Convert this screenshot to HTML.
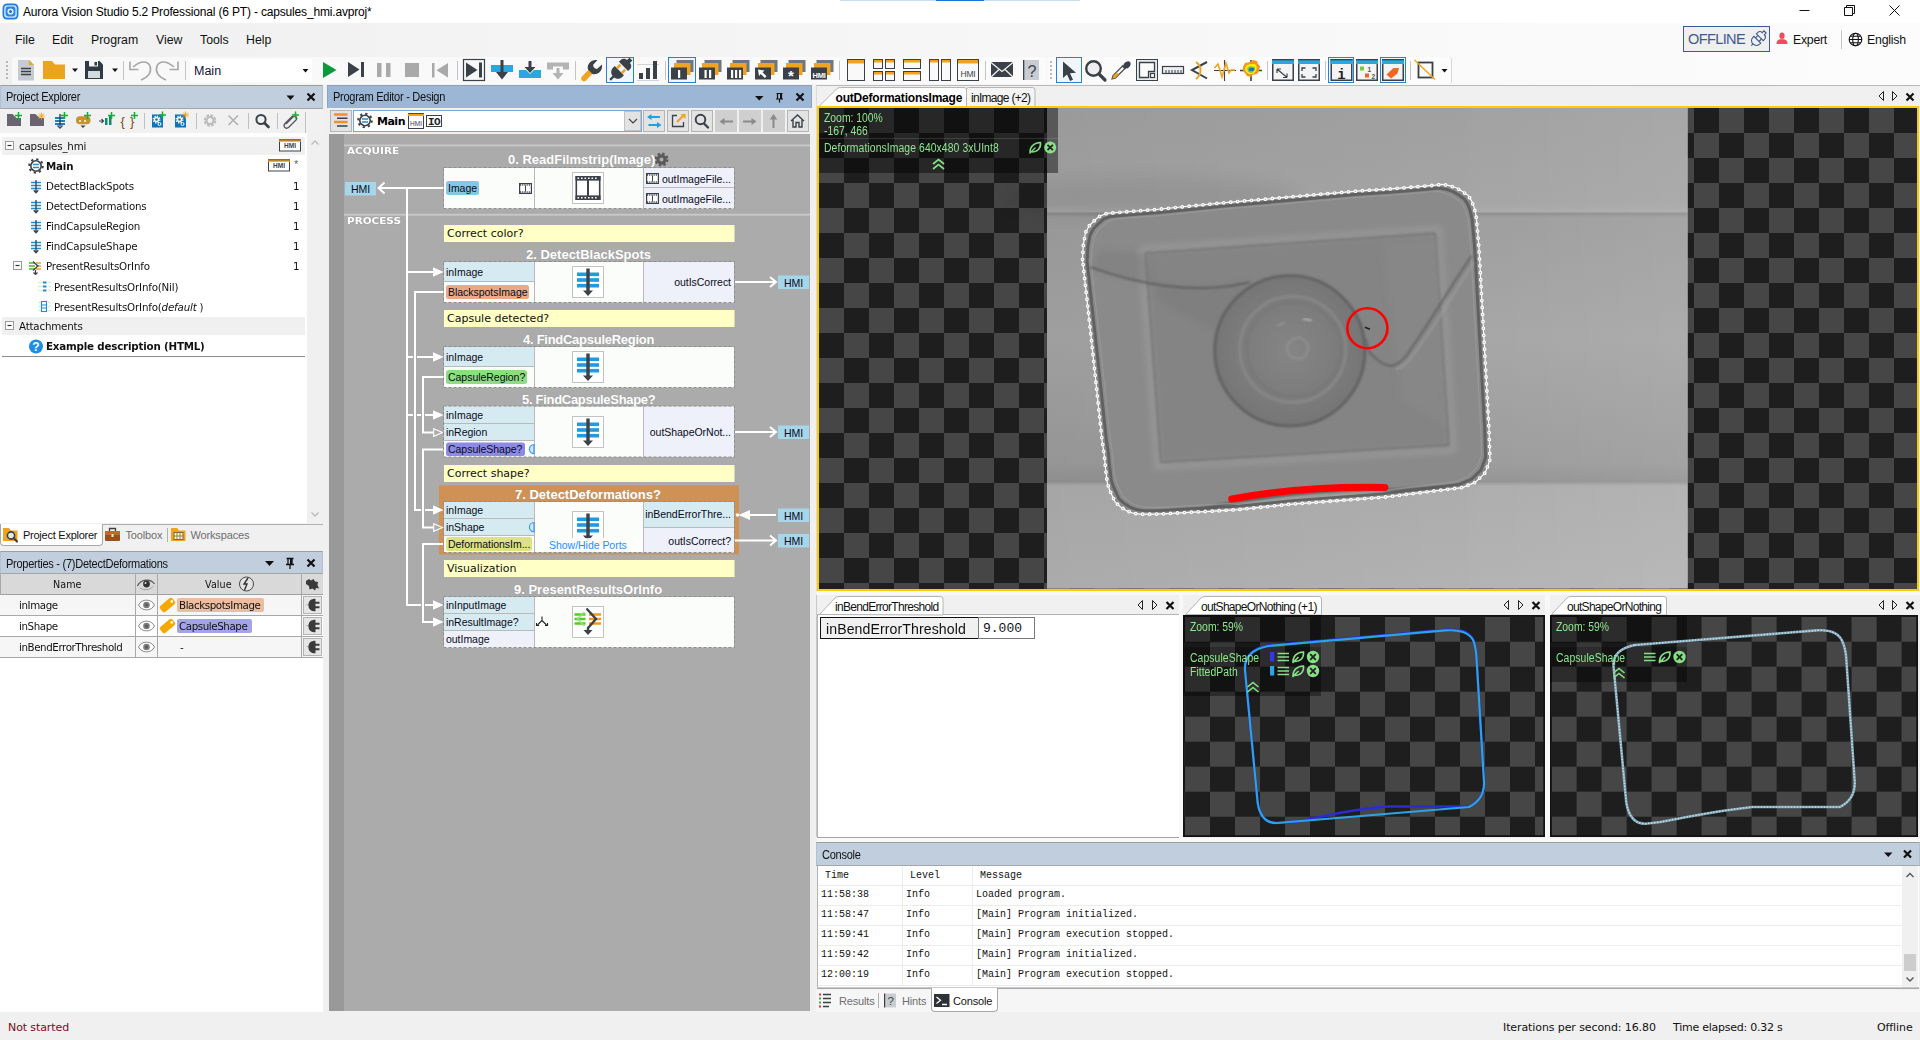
<!DOCTYPE html>
<html lang="en">
<head>
<meta charset="utf-8">
<title>Aurora Vision Studio 5.2 Professional (6 PT) - capsules_hmi.avproj*</title>
<style>
*{box-sizing:border-box;margin:0;padding:0}
html,body{width:1920px;height:1040px;overflow:hidden;background:#f0f0f0;font-family:"Liberation Sans",sans-serif;font-size:12px;color:#000}
.abs{position:absolute}
#app{position:relative;width:1920px;height:1040px;overflow:hidden;background:#f0f0f0}
.t{position:absolute;white-space:nowrap;line-height:1;margin-top:1px;transform-origin:0 50%}
svg{position:absolute;overflow:visible}
#titlebar{left:0;top:0;width:1920px;height:23px;background:#fff}
#menubar{left:0;top:23px;width:1920px;height:33px;background:linear-gradient(to right,#f0f0f0,#fcfcfc)}
#toolbar{left:0;top:56px;width:1920px;height:30px;background:linear-gradient(to right,#f0f0f0,#fcfcfc)}
.menu{font-size:12.3px;top:33px;color:#111}
.hdr{position:absolute;height:24px;background:#c1cedd;border-top:1px solid #9e9e9e;border-bottom:1px solid #a6a6a6;border-left:1px solid #b4c0cf;border-right:1px solid #b4c0cf}
.hdr.act{background:#9cb6d5;border-color:#8f9fb8 #8aa4c4 #9cb6d5 #8aa4c4}
.hdr .t{left:5px;top:4.200px;font-size:12px;color:#111;letter-spacing:-0.3px;transform:scaleX(0.92)}
.tsep{position:absolute;width:1px;background:#c8c8c8}
.selbtn{position:absolute;border:1px solid #2f7fd0;background:#f0f6fc}
.panel{position:absolute;background:#fff}
.chk{background:conic-gradient(#1e1e1e 25%,#464646 0 50%,#1e1e1e 0 75%,#464646 0) 0 0/50px 50px}
.tr{color:#111;font-family:"DejaVu Sans","Liberation Sans",sans-serif;font-size:11px;letter-spacing:-0.2px;transform:scaleX(0.935)}
.tr.b{font-weight:bold}
.tab{font-size:11px;letter-spacing:-0.15px}
.ph{font-family:"DejaVu Sans","Liberation Sans",sans-serif;font-size:11px;color:#111;letter-spacing:0.1px;transform:scaleX(0.87)}
.pv{font-family:"DejaVu Sans","Liberation Sans",sans-serif;font-size:11px;color:#111;letter-spacing:-0.45px;transform:scaleX(0.937);margin-top:0}
.st{font-family:"DejaVu Sans","Liberation Sans",sans-serif;font-size:11px;color:#111;letter-spacing:-0.1px}
.btn{width:22px;height:22px;background:#e3e3e3;border:1px solid #b4b4b4}
.btn.dis{background:#cfcfcf;border-color:#cfcfcf}
.sec{font-family:"DejaVu Sans","Liberation Sans",sans-serif;font-weight:bold;font-size:9px;color:#fff;letter-spacing:0;transform:scaleX(1.16);text-shadow:0 0 1px #888}
.bt{font-family:"Liberation Sans",sans-serif;font-weight:bold;font-size:13px;color:#fff;letter-spacing:0px;text-shadow:0 0 1px #999}
.cm{font-family:"DejaVu Sans","Liberation Sans",sans-serif;font-size:11px;color:#111;letter-spacing:0px}
.pt{font-size:10.500px;color:#0a0a1a;letter-spacing:-0.03px}
.pt.r{text-align:right}
.ov{font-size:12px;color:#8fe88f;letter-spacing:0;transform:scaleX(0.865)}
.vtab{font-size:12px;color:#111;letter-spacing:-0.7px}
.mono{font-family:"Liberation Mono",monospace;font-size:10px;color:#111}
</style>
</head>
<body>
<div id="app">
<!-- TITLE BAR -->
<div id="titlebar" class="abs"></div>
<div class="abs" style="left:840px;top:0;width:240px;height:1px;background:#c9dcf3"></div>
<div class="abs" style="left:936px;top:0;width:48px;height:1px;background:#1a73d9"></div>
<svg style="left:1.500px;top:3px" width="17" height="17" viewBox="0 0 17 17"><rect x="0.5" y="0.5" width="16" height="16" rx="4.5" fill="#1b7fe6"/><rect x="2.2" y="2.2" width="12.6" height="12.6" rx="3.2" fill="#cfe6ff"/><rect x="3.6" y="3.6" width="9.8" height="9.8" rx="2.4" fill="#2a86ea"/><circle cx="8.5" cy="8.5" r="3.1" fill="#dff0ff"/><circle cx="8.5" cy="8.5" r="1.5" fill="#1b6fd0"/></svg>
<div class="t" id="ttl" style="left:23px;top:5px;font-size:12px;color:#000;letter-spacing:-0.17px">Aurora Vision Studio 5.2 Professional (6 PT) - capsules_hmi.avproj*</div>
<svg style="left:1790px;top:0" width="130" height="23" viewBox="1790 0 130 23" fill="none" stroke="#111" stroke-width="1">
<path d="M1799.5 10.5h10"/>
<path d="M1844.5 7.5h8v8h-8z M1846.5 7.5v-2h8v8h-2"/>
<path d="M1889.5 5.5l10 10 M1899.5 5.5l-10 10"/>
</svg>
<!-- MENU BAR -->
<div id="menubar" class="abs"></div>
<div class="t menu" style="left:15px">File</div>
<div class="t menu" style="left:52px">Edit</div>
<div class="t menu" style="left:91px">Program</div>
<div class="t menu" style="left:156px">View</div>
<div class="t menu" style="left:200px">Tools</div>
<div class="t menu" style="left:246px">Help</div>
<div class="abs" style="left:1683px;top:26px;width:87px;height:26px;border:1px solid #3d5a96;background:#efefef"></div>
<div class="t" style="left:1688px;top:31px;font-size:14.500px;color:#3c5a8e;letter-spacing:-0.6px">OFFLINE</div>
<svg style="left:1748px;top:29px" width="20" height="20" viewBox="0 0 20 20" fill="none" stroke="#3c5a8e" stroke-width="1.100"><g transform="translate(10,10) rotate(-45)"><path d="M-9.500 0h2.500"/><path d="M-7 0c0-3 2-4.800 5-4.800h1v9.600h-1c-3 0-5-1.800-5-4.800z"/><path d="M-1 -2.500h3.500M-1 2.500h3.500"/><path d="M2.500 -4.800h1.500c2.500 0 3.500 2 3.500 3.300h2.500v3h-2.500c0 1.300-1 3.300-3.500 3.300h-1.500z"/></g></svg>
<svg style="left:1776px;top:32px" width="12" height="13" viewBox="0 0 12 13"><ellipse cx="6" cy="3.800" rx="2.600" ry="3.200" fill="#f04a5e"/><path d="M0.500 12c0-3.500 2-4.500 3.500-4.800h4c1.500 0.300 3.500 1.300 3.500 4.800z" fill="#f04a5e"/></svg>
<div class="t menu" style="left:1793px;letter-spacing:-0.25px">Expert</div>
<div class="tsep" style="left:1841px;top:30px;height:19px"></div>
<svg style="left:1848px;top:32px" width="15" height="15" viewBox="0 0 15 15" fill="none" stroke="#111" stroke-width="1.1"><circle cx="7.5" cy="7.500" r="6.3"/><ellipse cx="7.5" cy="7.5" rx="2.8" ry="6.3"/><path d="M1.2 7.5h12.600 M2.3 4.200h10.400 M2.3 10.800h10.400"/></svg>
<div class="t menu" style="left:1867px;letter-spacing:-0.2px">English</div>
<!-- TOOLBAR -->
<div id="toolbar" class="abs"></div>
<div class="abs" style="left:12px;top:57px;width:1034px;height:27px;background:rgba(255,255,255,0.5);border-radius:3px"></div>
<div class="abs" style="left:1047px;top:57px;width:405px;height:27px;background:rgba(255,255,255,0.5);border-radius:3px;border-right:1px solid #d8d8d8"></div>
<div class="abs" style="left:190px;top:59px;width:122px;height:23px;background:#fff"></div>
<div class="t" style="left:194px;top:64px;font-size:12.5px;color:#14143c">Main</div>
<div class="selbtn" style="left:606px;top:57px;width:28px;height:26px"></div>
<div class="selbtn" style="left:668px;top:57px;width:28px;height:26px"></div>
<div class="selbtn" style="left:1056px;top:57px;width:26px;height:26px"></div>
<div class="selbtn" style="left:1328px;top:57px;width:26px;height:26px"></div>
<div class="selbtn" style="left:1380px;top:57px;width:26px;height:26px"></div>
<svg style="left:0;top:56px" width="1460" height="30" viewBox="0 56 1460 30">
<defs>
<g id="stk"><rect x="5.5" y="4" width="17" height="12" fill="#6e767f"/><rect x="3" y="7" width="16.500" height="12" fill="#f0a31f"/><rect x="0" y="11.500" width="16" height="12" fill="#3b4149"/></g>
<g id="winb"><rect x="0.75" y="0.75" width="20.5" height="20.5" fill="#f4f4f4" stroke="#3b4149" stroke-width="1.5"/><rect x="0" y="0" width="22" height="5" fill="#29a8e0"/><rect x="0" y="0" width="22" height="1.300" fill="#3b4149"/></g>
</defs>
<!-- grip -->
<g fill="#b8b8b8"><rect x="6" y="61" width="2" height="2"/><rect x="6" y="65" width="2" height="2"/><rect x="6" y="69" width="2" height="2"/><rect x="6" y="73" width="2" height="2"/><rect x="6" y="77" width="2" height="2"/></g>
<!-- new doc -->
<path d="M18 60h11l5 5v15.500h-16z" fill="#c6cbd1"/><path d="M29 60l5 5h-5z" fill="#f0a31f"/>
<path d="M21 68.500h10M21 71.500h10M21 74.500h10" stroke="#3b4149" stroke-width="1.300"/>
<!-- folder -->
<path d="M43 61h9l3 3.500h10v14.500h-22z" fill="#eca420"/>
<path d="M72 68.500h6l-3 3.500z" fill="#111"/>
<!-- save -->
<path d="M85 61h14.500l3.500 3.500v14.500h-18z" fill="#2f3a47"/><rect x="88" y="71" width="12" height="7" fill="#d5d9de"/><rect x="89" y="61" width="9" height="5.500" fill="#f4f4f4"/><rect x="94.500" y="62" width="2.500" height="3.500" fill="#2f3a47"/>
<path d="M112 68.500h6l-3 3.500z" fill="#111"/>
<rect x="123" y="61" width="1" height="19" fill="#c4c4c4"/>
<!-- undo / redo -->
<g fill="none" stroke="#a6a6a6" stroke-width="1.600"><path d="M141 80c7-3 11-8 9-14c-2-5-9-6-17 1"/><path d="M130 61.500v8h8.500"/><path d="M166 80c-7-3-11-8-9-14c2-5 9-6 17 1"/><path d="M178 61.500v8h-8.500"/></g>
<rect x="185" y="61" width="1" height="19" fill="#c4c4c4"/>
<path d="M302.500 69h6l-3 3.500z" fill="#111"/>
<!-- play -->
<path d="M323 62l13.500 8-13.500 8z" fill="#0a9a3c"/>
<path d="M348 62l11.500 7.500-11.500 7.500z" fill="#3b4149"/><rect x="361" y="62" width="3" height="15" fill="#3b4149"/>
<rect x="377" y="63" width="4.500" height="14" fill="#a9a9a9"/><rect x="386" y="63" width="4.500" height="14" fill="#a9a9a9"/>
<rect x="405" y="63" width="14" height="14" fill="#a9a9a9"/>
<rect x="432" y="63" width="2.500" height="14.500" fill="#a9a9a9"/><path d="M448 63l-11.500 7.200 11.500 7.300z" fill="#a9a9a9"/>
<rect x="457" y="61" width="1" height="19" fill="#c4c4c4"/>
<rect x="463.500" y="59.500" width="21" height="21" fill="#f7f7f7" stroke="#3b4149" stroke-width="1.200"/>
<path d="M466 62.500l11.500 7.500-11.500 7.500z" fill="#3b4149"/><rect x="479" y="62.500" width="3" height="15" fill="#3b4149"/>
<!-- blue down 1 -->
<rect x="491" y="65" width="22" height="7" fill="#29a8e0"/><path d="M500.500 60h3v12h4.500l-6 7.500-6-7.500h4.500z" fill="#3b4149"/>
<!-- blue down 2 -->
<path d="M519 70h7l4 4 4-4h7v8h-22z" fill="#29a8e0"/><path d="M528.500 61h3v6h4l-5.500 6-5.500-6h4z" fill="#3b4149"/>
<!-- gray down -->
<path d="M547 62.500h22v7h-6v-3h-10v3h-6z" fill="#b4b4b4"/><path d="M556.500 68h3v5h4l-5.500 6.500-5.500-6.500h4z" fill="#b4b4b4"/>
<rect x="575" y="61" width="1" height="19" fill="#c4c4c4"/>
<!-- wrench -->
<path d="M584 78.500l8.500-9" stroke="#f0a31f" stroke-width="5.500" stroke-linecap="round"/>
<path d="M591 72.500l-3-3c-1.500-5 3-10.500 9.500-9.500l-4.500 5 1 3 3 1 5-4.500c1 6.500-4.500 11-9.500 9.500z" fill="#3b4149"/>
<!-- plug -->
<g transform="translate(620,70) rotate(-45)">
<path d="M-14 0h5" stroke="#3b4149" stroke-width="2.200"/>
<path d="M-9.500 0c0-4 2.500-6.500 6.500-6.500h2v13h-2c-4 0-6.500-2.500-6.500-6.500z" fill="#3b4149"/>
<rect x="-1" y="-4.700" width="5" height="2.600" fill="#f0a31f"/><rect x="-1" y="2.100" width="5" height="2.600" fill="#f0a31f"/>
<path d="M5 -6.500h2.500c3 0 4.500 2.500 4.500 4.500h3.500v4h-3.500c0 2-1.500 4.500-4.500 4.500h-2.500z" fill="#3b4149"/>
</g>
<!-- bars -->
<path d="M637 64.500h22M637 80.500h22" stroke="#cfd4da" stroke-width="1"/><rect x="639" y="73" width="4" height="6" fill="#3b4149"/><rect x="646" y="68" width="4" height="11" fill="#3b4149"/><rect x="653" y="61" width="4" height="18" fill="#3b4149"/>
<rect x="665" y="61" width="1" height="19" fill="#c4c4c4"/>
<!-- stack icons -->
<use href="#stk" x="671" y="56"/><use href="#stk" x="699" y="56"/><use href="#stk" x="727" y="56"/><use href="#stk" x="755" y="56"/><use href="#stk" x="783" y="56"/><use href="#stk" x="811" y="56"/>
<g fill="#fff"><rect x="678" y="70" width="2.200" height="8"/><rect x="704.500" y="70" width="2.200" height="8"/><rect x="709" y="70" width="2.200" height="8"/><rect x="731" y="70" width="2.200" height="8"/><rect x="735" y="70" width="2.200" height="8"/><rect x="739" y="70" width="2.200" height="8"/>
<path d="M758 69.500l6.500 1-2 1.800 4 4-1.700 1.700-4-4-1.800 2z"/></g>
<text x="791" y="81" font-family="Liberation Sans,sans-serif" font-size="15" font-weight="bold" fill="#fff" text-anchor="middle">*</text>
<text x="819" y="78.300" font-family="Liberation Sans,sans-serif" font-size="7.500" font-weight="bold" fill="#fff" text-anchor="middle" letter-spacing="-0.3">HMI</text>
<rect x="839" y="61" width="1" height="19" fill="#c4c4c4"/>
<!-- layouts -->
<g fill="#f9f9f9"><rect x="847.500" y="59.500" width="17" height="21"/><rect x="873.500" y="59.500" width="9" height="9"/><rect x="885.500" y="59.500" width="9" height="9"/><rect x="873.500" y="71.500" width="9" height="9"/><rect x="885.500" y="71.500" width="9" height="9"/><rect x="903.500" y="59.500" width="17" height="9"/><rect x="903.500" y="71.500" width="17" height="9"/><rect x="929.500" y="59.500" width="9" height="21"/><rect x="941.500" y="59.500" width="9" height="21"/><rect x="957.500" y="59.500" width="21" height="21"/></g>
<g fill="#f0a31f"><rect x="847" y="59" width="18" height="4.500"/><rect x="873" y="59" width="10" height="3.500"/><rect x="885" y="59" width="10" height="3.500"/><rect x="873" y="71" width="10" height="3.500"/><rect x="885" y="71" width="10" height="3.500"/><rect x="903" y="59" width="18" height="3.500"/><rect x="903" y="71" width="18" height="3.500"/><rect x="929" y="59" width="10" height="3.500"/><rect x="941" y="59" width="10" height="3.500"/><rect x="957" y="59" width="22" height="4.500"/></g>
<g fill="none" stroke="#3b4149" stroke-width="1"><rect x="847.500" y="59.500" width="17" height="21"/><rect x="873.500" y="59.500" width="9" height="9"/><rect x="885.500" y="59.500" width="9" height="9"/><rect x="873.500" y="71.500" width="9" height="9"/><rect x="885.500" y="71.500" width="9" height="9"/><rect x="903.500" y="59.500" width="17" height="9"/><rect x="903.500" y="71.500" width="17" height="9"/><rect x="929.500" y="59.500" width="9" height="21"/><rect x="941.500" y="59.500" width="9" height="21"/><rect x="957.500" y="59.500" width="21" height="21"/></g>
<text x="968" y="76.500" font-family="Liberation Sans,sans-serif" font-size="8.500" fill="#3b4149" text-anchor="middle" letter-spacing="-0.2">HMI</text>
<rect x="985" y="61" width="1" height="19" fill="#c4c4c4"/>
<!-- mail -->
<rect x="991" y="62" width="22" height="15" fill="#3b4149"/><path d="M991 62.500l11 9 11-9M991 77l8-7.500M1013 77l-8-7.500" stroke="#f4f4f4" stroke-width="1.200" fill="none"/>
<!-- help -->
<rect x="1023" y="60" width="16" height="20" fill="#c9cdd2"/><rect x="1023" y="60" width="1.300" height="20" fill="#3b4149"/>
<text x="1032" y="76.500" font-family="Liberation Sans,sans-serif" font-size="16" fill="#3b4149" text-anchor="middle">?</text>
<g fill="#b8b8b8"><rect x="1050" y="61" width="2" height="2"/><rect x="1050" y="65" width="2" height="2"/><rect x="1050" y="69" width="2" height="2"/><rect x="1050" y="73" width="2" height="2"/><rect x="1050" y="77" width="2" height="2"/></g>
<!-- pointer -->
<path d="M1063 61.500v16.500l4-3.500 3 6.500 3-1.300-3-6.500 6-0.500z" fill="#3b4149"/>
<!-- magnifier -->
<circle cx="1093.500" cy="68.500" r="7.300" fill="#eceef0" stroke="#3b4149" stroke-width="2.400"/><path d="M1099 74l6 6" stroke="#3b4149" stroke-width="3.200" stroke-linecap="round"/>
<!-- dropper -->
<path d="M1112 79l1-3.500 10-10 2.500 2.500-10 10z" fill="#f4f4f4" stroke="#3b4149" stroke-width="1.100"/><path d="M1112.300 78.800l1-3 3.500-3.500 2 2-3.500 3.500z" fill="#f0a31f"/><path d="M1121.500 66l3.500 3.500 1.500-1.500 1 0.500c3-2 4-5 2.500-6.500s-4.500-0.500-6.500 2.500l0.500 1z" fill="#3b4149"/>
<!-- box -->
<rect x="1136.500" y="59.500" width="21" height="21" fill="#e9ebed" stroke="#3b4149" stroke-width="1"/><path d="M1139.500 62.500h15v9h-6v6h-9z" fill="#fbfbfb" stroke="#3b4149" stroke-width="1.300"/><rect x="1150.500" y="73.500" width="4" height="4" fill="#fbfbfb" stroke="#3b4149" stroke-width="1.200"/>
<!-- ruler -->
<rect x="1162.500" y="66.500" width="21" height="7" fill="#eceef0" stroke="#3b4149" stroke-width="1.200"/><path d="M1166 70v3M1169 70v3M1172 70v3M1175 70v3M1178 70v3M1181 70v3" stroke="#3b4149" stroke-width="1"/>
<!-- caliper -->
<path d="M1207 62l-15 8 15 8.500" fill="none" stroke="#3b4149" stroke-width="2"/><path d="M1196 62c6 4 6 12 0 17" fill="none" stroke="#f0a31f" stroke-width="2"/>
<!-- wave -->
<path d="M1214 70.500h22M1224.500 60v21" stroke="#3b4149" stroke-width="1.100"/><path d="M1214.500 68l3.500-4 4 13 4-14 3 10 2-3h4" fill="none" stroke="#f0a31f" stroke-width="1.600"/>
<!-- heatmap -->
<path d="M1240 70.500h22M1251 60v21" stroke="#3b4149" stroke-width="1.600"/><path d="M1243 67l2-4 5-1 3-2 4 1 1 3 2 2-1 5-2 3-5 1-1 2-4-1-2-3-2-2z" fill="#f7941d"/><path d="M1245 68l2-3 4-1 4 0 2 3-1 4-3 3-4 0-3-2z" fill="#fff200"/><path d="M1247 68l3-2 5 1 0 3-3 3-4-1z" fill="#7ac943"/><path d="M1248.500 69l3-1.500 3 1-1 2.500-4 0z" fill="#1f6fd0"/>
<rect x="1267" y="61" width="1" height="19" fill="#c4c4c4"/>
<use href="#winb" x="1272" y="59"/><path d="M1277 69l10 8.500M1277 69v4M1277 69h4M1287 77.500v-4M1287 77.500h-4" stroke="#3b4149" stroke-width="1.200" fill="none"/>
<use href="#winb" x="1298" y="59"/><path d="M1302 71v-3h3.500M1312.500 68h3.500v3M1316 74v3h-3.500M1305.500 77h-3.500v-3" stroke="#3b4149" stroke-width="1.300" fill="none"/>
<rect x="1325" y="61" width="1" height="19" fill="#c4c4c4"/>
<use href="#winb" x="1330.500" y="59"/>
<text x="1341.500" y="78.500" font-family="Liberation Mono,monospace" font-size="14" font-weight="bold" fill="#222" text-anchor="middle">i</text>
<use href="#winb" x="1356" y="59"/><rect x="1360" y="66.500" width="4" height="4" fill="#7ac943"/><rect x="1365" y="73.500" width="4" height="4" fill="#f26522"/>
<text x="1367.500" y="72" font-family="Liberation Sans,sans-serif" font-size="6.500" font-weight="bold" fill="#555">1</text><text x="1371.500" y="79" font-family="Liberation Sans,sans-serif" font-size="6.500" font-weight="bold" fill="#555">2</text>
<use href="#winb" x="1382" y="59"/><path d="M1386.500 74.500l7-6.500h5.500l-1.500 5.500-6.500 5z" fill="#f26522"/>
<rect x="1410" y="61" width="1" height="19" fill="#c4c4c4"/>
<rect x="1418.500" y="62.500" width="14" height="15" fill="none" stroke="#3b4149" stroke-width="1.800"/><path d="M1414.500 60l20.500 19.500" stroke="#f0a31f" stroke-width="1.500"/>
<path d="M1441.500 69h6l-3 3.500z" fill="#111"/>
</svg>
<!-- PROJECT EXPLORER -->
<div class="hdr" style="left:0;top:85px;width:323px"><div class="t">Project Explorer</div></div>
<svg style="left:280px;top:85px" width="40" height="24" viewBox="280 85 40 24"><path d="M286.500 95.500h8l-4 4.500z" fill="#111"/><path d="M307.500 93.500l7 7M314.500 93.500l-7 7" stroke="#111" stroke-width="2.200"/></svg>
<div class="abs" style="left:0;top:109px;width:323px;height:24px;background:#f1f1f1"></div>
<svg style="left:0;top:108px" width="323" height="26" viewBox="0 108 323 26">
<defs><g id="plus"><path d="M0 3.500h7M3.500 0v7" stroke="#10b030" stroke-width="1.500"/></g>
<g id="spark"><path d="M0 3.500h7M3.500 0v7M1 1l5 5M6 1l-5 5" stroke="#f0a31f" stroke-width="0.900"/></g></defs>
<path d="M7 114h5.500l4 4h4.500v8h-14z" fill="#6a6470"/><use href="#plus" x="15" y="112"/>
<path d="M30 114h5.500l4 4h4.500v8h-14z" fill="#6a6470"/><use href="#spark" x="38" y="112.500"/>
<path d="M55 118h10M55 121h10M55 124h10" stroke="#1f7fc0" stroke-width="1.800"/><path d="M60 114v12M57.500 125.500l2.500 2.500 2.500-2.500" stroke="#3b4149" stroke-width="1.400" fill="none"/><use href="#plus" x="61" y="112"/>
<rect x="76" y="116.300" width="14.500" height="8" rx="3.800" fill="#c9932c"/><circle cx="80" cy="121" r="1" fill="#fff"/><circle cx="85" cy="121" r="1" fill="#fff"/><path d="M80.500 125.500h5l-2.500 2.500z" fill="#3b4149"/><use href="#plus" x="84" y="112"/>
<path d="M99 121h4M101.500 119l2 2-2 2" stroke="#3b4149" stroke-width="1.100" fill="none"/><rect x="105" y="118" width="2.500" height="7" fill="#0f8a6a"/><rect x="109" y="116" width="2.500" height="9" fill="#0f8a6a"/><use href="#plus" x="108" y="112"/>
<text x="120.500" y="125.500" font-family="Liberation Sans,sans-serif" font-size="13" fill="#7a4a12">{</text><text x="130" y="125.500" font-family="Liberation Sans,sans-serif" font-size="13" fill="#7a4a12">}</text><use href="#plus" x="131" y="112"/>
<rect x="144" y="113" width="1" height="16" fill="#c0c0c0"/>
<rect x="152" y="114.500" width="11" height="13" fill="#0b74bb"/><circle cx="156.500" cy="119.500" r="2" fill="none" stroke="#fff" stroke-width="1.300"/><circle cx="156.500" cy="119.500" r="3.300" fill="none" stroke="#fff" stroke-width="1.400" stroke-dasharray="1.300 1.290"/><circle cx="159.500" cy="124" r="1.500" fill="none" stroke="#fff" stroke-width="1"/><use href="#plus" x="159" y="111.500"/>
<rect x="175" y="114.500" width="11" height="13" fill="#0b74bb"/><circle cx="179.500" cy="119.500" r="2" fill="none" stroke="#fff" stroke-width="1.300"/><circle cx="179.500" cy="119.500" r="3.300" fill="none" stroke="#fff" stroke-width="1.400" stroke-dasharray="1.300 1.290"/><circle cx="182.500" cy="124" r="1.500" fill="none" stroke="#fff" stroke-width="1"/><use href="#spark" x="182" y="111.500"/>
<rect x="196" y="113" width="1" height="16" fill="#c0c0c0"/>
<circle cx="210" cy="120.500" r="4.500" fill="none" stroke="#bdbdbd" stroke-width="3.500" stroke-dasharray="2.400 1.100"/><circle cx="210" cy="120.500" r="3.500" fill="none" stroke="#bdbdbd" stroke-width="2"/>
<path d="M228.500 115.500l9.500 9.500M238 115.500l-9.500 9.500" stroke="#b0b0b0" stroke-width="1.600"/>
<rect x="248" y="113" width="1" height="16" fill="#c0c0c0"/>
<circle cx="261" cy="119.500" r="4.600" fill="#f1f1f1" stroke="#3b4149" stroke-width="2"/><path d="M264.500 123l4 4" stroke="#3b4149" stroke-width="2.600" stroke-linecap="round"/>
<rect x="277" y="113" width="1" height="16" fill="#c0c0c0"/>
<path d="M286 124l7-7c2-2 5 0.500 3 3l-7 7c-3 3-6.500-0.500-4-3.500l7.500-7.500" fill="none" stroke="#55595f" stroke-width="1.300"/><use href="#plus" x="292" y="111.500"/>
<rect x="305" y="112" width="1" height="21" fill="#c0c0c0"/>
</svg>
<div class="panel" style="left:0;top:133px;width:307px;height:390px"></div>
<div class="abs" style="left:307px;top:133px;width:16px;height:390px;background:#f0f0f0"></div>
<svg style="left:307px;top:133px" width="16" height="390" viewBox="0 0 16 390" fill="none" stroke="#b9b9b9" stroke-width="1.300"><path d="M4.500 11.500l3.500-3.500 3.500 3.500M4.500 379.500l3.500 3.500 3.500-3.500"/></svg>
<!-- tree rows -->
<div class="abs" style="left:2px;top:137px;width:303px;height:18px;background:#f0f0f0"></div>
<div class="abs" style="left:2px;top:317px;width:303px;height:18px;background:#f0f0f0"></div>
<div class="abs" style="left:2px;top:356px;width:303px;height:1px;background:#8c8c8c"></div>
<svg style="left:0;top:133px" width="307" height="230" viewBox="0 133 307 230">
<defs>
<g id="minus"><rect x="0.500" y="0.500" width="8" height="8" fill="#fff" stroke="#9a9a9a"/><path d="M2.500 4.500h4" stroke="#333" stroke-width="1.200"/></g>
<g id="filt"><path d="M0 2.500h10M0 5.500h10M0 8.500h10" stroke="#1f8fd0" stroke-width="1.700"/><path d="M5 0v12M2.700 10.300l2.300 2.400 2.300-2.400" stroke="#3b4149" stroke-width="1.300" fill="none"/></g>
<g id="hmi"><rect x="0.500" y="0.500" width="21" height="11" fill="#fff" stroke="#3b4149" stroke-width="1"/><rect x="0" y="0" width="22" height="2.300" fill="#f0a31f"/><rect x="0" y="0" width="22" height="0.800" fill="#3b4149"/></g>
</defs>
<use href="#minus" x="5" y="141"/><use href="#minus" x="13" y="261"/><use href="#minus" x="5" y="321"/>
<use href="#hmi" x="279" y="139.500"/><text x="290" y="148.300" font-family="Liberation Sans,sans-serif" font-size="6.500" font-weight="bold" fill="#3b4149" text-anchor="middle">HMI</text>
<use href="#hmi" x="268" y="159.500"/><text x="279" y="168.300" font-family="Liberation Sans,sans-serif" font-size="6.500" font-weight="bold" fill="#3b4149" text-anchor="middle">HMI</text>
<!-- main gear -->
<circle cx="36" cy="166" r="5.200" fill="#fff" stroke="#3b4149" stroke-width="1.600"/><circle cx="36" cy="166" r="6.800" fill="none" stroke="#3b4149" stroke-width="2" stroke-dasharray="2.300 3.040"/><path d="M33 164.500h6M33 167.500h6" stroke="#1f8fd0" stroke-width="1.500"/>
<use href="#filt" x="31" y="180"/><use href="#filt" x="31" y="200"/><use href="#filt" x="31" y="220"/><use href="#filt" x="31" y="240"/>
<!-- present icon -->
<path d="M29 263h6M29 266h6M29 269h6" stroke="#3fc21f" stroke-width="1.600"/><path d="M36 263h5M36 266h5M36 269h5" stroke="#f0a31f" stroke-width="1.600"/><path d="M33 261.500l5 4.500-5 4.500M35.500 270v4M33.500 272.500l2 2 2-2" stroke="#3b4149" stroke-width="1.200" fill="none"/>
<path d="M38 282.500h5M38 286.500h5M38 290.500h5" stroke="#d8f2d0" stroke-width="1.500"/><path d="M48 282.500h3M48 286.500h3M48 290.500h3" stroke="#d8f2d0" stroke-width="1.500"/><path d="M43 282.500h3.500M43 286.500h3.500M43 290.500h3.500" stroke="#1f8fd0" stroke-width="1.800"/>
<path d="M38 302.500h5M38 306.500h5M38 310.500h5" stroke="#d8f2d0" stroke-width="1.500"/><path d="M48 302.500h3M48 306.500h3M48 310.500h3" stroke="#d8f2d0" stroke-width="1.500"/><rect x="41.500" y="301.500" width="5" height="10" fill="#fff" stroke="#1f8fd0" stroke-width="1.100"/><path d="M41.500 305h5M41.500 308h5" stroke="#1f8fd0" stroke-width="1"/>
<circle cx="36" cy="346.500" r="7" fill="#1f8de6"/><text x="36" y="351" font-family="Liberation Sans,sans-serif" font-size="12" font-weight="bold" fill="#fff" text-anchor="middle">?</text>
</svg>
<div class="t tr" style="left:19px;top:140px">capsules_hmi</div>
<div class="t tr b" style="left:46px;top:160px">Main</div>
<div class="t" style="left:294px;top:158px;font-size:11px;color:#666">*</div>
<div class="t tr" style="left:46px;top:180px">DetectBlackSpots</div><div class="t tr" style="left:293px;top:180px">1</div>
<div class="t tr" style="left:46px;top:200px">DetectDeformations</div><div class="t tr" style="left:293px;top:200px">1</div>
<div class="t tr" style="left:46px;top:220px">FindCapsuleRegion</div><div class="t tr" style="left:293px;top:220px">1</div>
<div class="t tr" style="left:46px;top:240px">FindCapsuleShape</div><div class="t tr" style="left:293px;top:240px">1</div>
<div class="t tr" style="left:46px;top:260px">PresentResultsOrInfo</div><div class="t tr" style="left:293px;top:260px">1</div>
<div class="t tr" style="left:54px;top:281px">PresentResultsOrInfo(Nil)</div>
<div class="t tr" style="left:54px;top:301px">PresentResultsOrInfo(<i>default </i>)</div>
<div class="t tr" style="left:19px;top:320px">Attachments</div>
<div class="t tr b" style="left:46px;top:340px">Example description (HTML)</div>
<!-- LEFT TAB STRIP -->
<div class="abs" style="left:0;top:523px;width:323px;height:28px;background:#f0f0f0"></div>
<div class="abs" style="left:0;top:524px;width:323px;height:1px;background:#b0b0b0"></div>
<div class="abs" style="left:0;top:524px;width:103px;height:22px;background:#fff;border:1px solid #a8a8a8;border-top:none;border-radius:0 0 4px 4px"></div>
<svg style="left:0;top:525px" width="323" height="22" viewBox="0 525 323 22">
<path d="M3 528h6l2 2.500h6.500v10.500h-14.500z" fill="#f0a31f"/><circle cx="11" cy="535.500" r="3.600" fill="#e8e8e8" stroke="#3b4149" stroke-width="1.600"/><path d="M13.800 538.300l3.200 3.200" stroke="#3b4149" stroke-width="2.200" stroke-linecap="round"/>
<rect x="105" y="531" width="15" height="10" rx="1" fill="#9a4f1c"/><rect x="105" y="531" width="15" height="4" fill="#c06a2a"/><path d="M109.500 531v-2.500h6v2.500" fill="none" stroke="#3b4149" stroke-width="1.300"/><rect x="111.500" y="534" width="2" height="3" fill="#f5e9c8"/>
<rect x="167" y="528" width="1" height="14" fill="#b0b0b0"/>
<path d="M171 528h6l2 2.500h6.500v10.500h-14.500z" fill="#f0a31f"/><rect x="174" y="532.500" width="9" height="7" fill="#fdf3d8" stroke="#7a6a3a" stroke-width="1"/><path d="M177 532.500v7M180 532.500v7M174 536h9" stroke="#7a6a3a" stroke-width="0.800"/>
</svg>
<div class="t tab" style="left:23px;top:528.500px;color:#111;letter-spacing:-0.25px">Project Explorer</div>
<div class="t tab" style="left:125.500px;top:528.500px;color:#6e6e6e">Toolbox</div>
<div class="t tab" style="left:190.500px;top:528.500px;color:#6e6e6e">Workspaces</div>
<!-- PROPERTIES -->
<div class="hdr" style="left:0;top:551px;width:323px;height:23px"><div class="t" style="top:4.500px">Properties - (7)DetectDeformations</div></div>
<svg style="left:260px;top:551px" width="60" height="23" viewBox="260 551 60 23"><path d="M265 561h9l-4.500 5z" fill="#111"/><path d="M286.500 558.500h7M288 558.500v6h4v-6M286 564.500h8M290 564.500v4.500" stroke="#111" stroke-width="1.300" fill="none"/><rect x="290" y="559" width="2" height="5.500" fill="#111"/><path d="M307.500 559.500l7 7M314.500 559.500l-7 7" stroke="#111" stroke-width="2.200"/></svg>
<div class="panel" style="left:0;top:574px;width:323px;height:438px"></div>
<div class="abs" style="left:0;top:574px;width:323px;height:21px;background:#d9d9d9;border-bottom:1px solid #a0a0a0"></div>
<div class="abs" style="left:0;top:595px;width:323px;height:20px;background:#f6f6f6"></div>
<div class="abs" style="left:0;top:637px;width:323px;height:20px;background:#f6f6f6"></div>
<div class="abs" style="left:0;top:615px;width:323px;height:1px;background:#a8a8a8"></div>
<div class="abs" style="left:0;top:636px;width:323px;height:1px;background:#a8a8a8"></div>
<div class="abs" style="left:0;top:657px;width:323px;height:1px;background:#a8a8a8"></div>
<div class="abs" style="left:135px;top:574px;width:1px;height:83px;background:#a8a8a8"></div>
<div class="abs" style="left:157px;top:574px;width:1px;height:83px;background:#a8a8a8"></div>
<div class="abs" style="left:301px;top:574px;width:1px;height:83px;background:#a8a8a8"></div>
<div class="abs" style="left:0;top:574px;width:1px;height:21px;background:#a8a8a8"></div>
<div class="t ph" style="left:53px;top:578px">Name</div>
<div class="t ph" style="left:204.500px;top:578px">Value</div>
<div class="t pv" style="left:19px;top:600px">inImage</div>
<div class="t pv" style="left:19px;top:621px">inShape</div>
<div class="t pv" style="left:19px;top:642px">inBendErrorThreshold</div>
<div class="abs" style="left:177px;top:598px;width:87px;height:14px;background:#eebd9e;border-radius:2px"></div>
<div class="abs" style="left:177px;top:619px;width:75px;height:14px;background:#a3a3ea;border-radius:2px"></div>
<div class="t pv" style="left:179px;top:600px">BlackspotsImage</div>
<div class="t pv" style="left:179px;top:621px">CapsuleShape</div>
<div class="t pv" style="left:180px;top:642px">-</div>
<svg style="left:136px;top:574px" width="187" height="84" viewBox="136 574 187 84">
<defs>
<g id="eye"><path d="M0 5c3-6.500 13-6.500 16 0c-3 6.500-13 6.500-16 0z" fill="#fff" stroke="#8a8a8a" stroke-width="1"/><circle cx="8" cy="5" r="3.300" fill="#7d7d7d"/><circle cx="8" cy="5" r="1.500" fill="#5a5a5a"/></g>
<g id="tag"><rect x="-8" y="-3.900" width="16" height="7.800" rx="2.200" fill="#f7a800" transform="translate(7,7.500) rotate(-40)"/><circle cx="11.300" cy="3.900" r="1.300" fill="#fff"/></g>
<g id="plugb"><rect x="0.500" y="0.500" width="18" height="17" fill="#e6e6e6" stroke="#b4b4b4"/><path d="M2.500 9h3c0-4 2.500-6 7-6v3h4v2h-4v2.400h4v2h-4v3c-4.500 0-7-2-7-6z" fill="#3a3a3a" transform="translate(0,-0.200)"/></g>
</defs>
<path d="M137.500 586c3-7 13-8 17-2" fill="none" stroke="#555" stroke-width="1.200"/><circle cx="146.500" cy="584" r="3.400" fill="#333"/><circle cx="145.500" cy="583" r="1" fill="#ddd"/><path d="M140 588c4 2.500 10 2.500 13.500-2" fill="none" stroke="#999" stroke-width="0.900"/>
<circle cx="246.500" cy="584" r="7" fill="#e4e4e4" stroke="#444" stroke-width="1"/><path d="M248 578l-4 6h3l-2.500 6" fill="none" stroke="#333" stroke-width="1.400"/>
<path d="M306 581l3-2 2 1.500 2.500-1.500 1.500 2.500 3 0.500-0.500 3 1.500 3.500-3-0.500-1 2.500-2.500-2-3 1-0.500-3.500-3-2z" fill="#3a3a3a"/>
<use href="#eye" x="138.500" y="600"/><use href="#eye" x="138.500" y="621"/><use href="#eye" x="138.500" y="642"/>
<use href="#tag" x="160.500" y="597.500"/><use href="#tag" x="160.500" y="618.500"/>
<use href="#plugb" x="303" y="596"/><use href="#plugb" x="303" y="617"/><use href="#plugb" x="303" y="638"/>
</svg>
<!-- STATUS BAR -->
<div class="abs" style="left:0;top:1012px;width:1920px;height:28px;background:#f0f0f0"></div>
<div class="t st" style="left:8px;top:1021px;color:#7a0a1c">Not started</div>
<div class="t st" style="left:1503px;top:1021px">Iterations per second: 16.80</div>
<div class="t st" style="left:1673px;top:1021px;letter-spacing:-0.24px">Time elapsed: 0.32 s</div>
<div class="t st" style="left:1877px;top:1021px">Offline</div>
<!-- PROGRAM EDITOR -->
<div class="hdr act" style="left:327px;top:85px;width:485px;height:23px"><div class="t">Program Editor - Design</div></div>
<svg style="left:750px;top:85px" width="60" height="23" viewBox="750 85 60 23"><path d="M755 96h8.500l-4.250 4.500z" fill="#111"/><path d="M776.500 93.500h6M777.500 93.500v5.500h4v-5.500M776 99h7M779.500 99v3.500" stroke="#111" stroke-width="1.200" fill="none"/><rect x="780" y="94" width="1.500" height="5" fill="#111"/><path d="M796.500 93.500l7 7M803.500 93.500l-7 7" stroke="#111" stroke-width="2.200"/></svg>
<div class="abs" style="left:327px;top:108px;width:485px;height:26px;background:#f0f0f0"></div>
<div class="abs btn" style="left:330px;top:110px"></div>
<div class="abs" style="left:353px;top:110px;width:289px;height:22px;background:#fff;border:1px solid #7ea6d3"></div>
<div class="abs" style="left:624px;top:111px;width:17px;height:20px;background:#e3e3e3;border:1px solid #c2c2c2"></div>
<div class="abs btn" style="left:643px;top:110px"></div>
<div class="abs btn" style="left:667px;top:110px"></div>
<div class="abs btn" style="left:691px;top:110px"></div>
<div class="abs btn dis" style="left:715px;top:110px"></div>
<div class="abs btn dis" style="left:739px;top:110px"></div>
<div class="abs btn dis" style="left:763px;top:110px"></div>
<div class="abs btn" style="left:787px;top:110px"></div>
<svg style="left:327px;top:108px" width="485" height="26" viewBox="327 108 485 26">
<path d="M334 114.500h13.500M334 122h13.500" stroke="#f0922a" stroke-width="2.600"/><path d="M337 118.300h10.500M337 126h10.500" stroke="#3b4149" stroke-width="1.500"/>
<circle cx="365" cy="120.500" r="5.200" fill="#fff" stroke="#3b4149" stroke-width="1.600"/><circle cx="365" cy="120.500" r="6.800" fill="none" stroke="#3b4149" stroke-width="2" stroke-dasharray="2.300 3.040"/><path d="M362 119h6M362 122h6" stroke="#1f8fd0" stroke-width="1.500"/>
<rect x="408.500" y="113.500" width="15" height="15" fill="#fff" stroke="#3b4149" stroke-width="1"/><rect x="408" y="113" width="16" height="3" fill="#f0a31f"/><rect x="408" y="113" width="16" height="0.900" fill="#3b4149"/>
<text x="416" y="126" font-family="Liberation Sans,sans-serif" font-size="6.500" fill="#3b4149" text-anchor="middle">HMI</text>
<rect x="426.500" y="115.500" width="15" height="11" fill="#fff" stroke="#3b4149" stroke-width="1"/>
<text x="434" y="125" font-family="Liberation Mono,monospace" font-size="11" font-weight="bold" fill="#222" text-anchor="middle" letter-spacing="-0.500">IO</text>
<path d="M629 119l4 4 4-4" fill="none" stroke="#444" stroke-width="1.200"/>
<g stroke="#1e9fe6" stroke-width="1.800" fill="none"><path d="M649 117h11M659.500 125h-11"/></g><path d="M647 117l4.500-3v6zM661.500 125l-4.500-3v6z" fill="#1e9fe6"/>
<path d="M677 115.500h-4.500v11h11v-4.500" fill="none" stroke="#3b4149" stroke-width="1.300"/><path d="M677 122l7-7" stroke="#f0a31f" stroke-width="2.200"/><path d="M680.500 114h5v5z" fill="#f0a31f"/>
<circle cx="700.500" cy="119.500" r="4.800" fill="#dfe1e4" stroke="#3b4149" stroke-width="1.900"/><path d="M704 123.500l4 4" stroke="#3b4149" stroke-width="2.400" stroke-linecap="round"/>
<g stroke="#8a8a8a" stroke-width="2" fill="#8a8a8a"><path d="M722 121.500h11"/><path d="M719.500 121.500l5-3.500v7z" stroke="none"/><path d="M743 121.500h11"/><path d="M756.500 121.500l-5-3.500v7z" stroke="none"/><path d="M773.500 117v11"/><path d="M773.500 114l-3.800 5.500h7.600z" stroke="none"/></g>
<path d="M791 121l6.500-6 6.500 6M793 120v7h3v-4.500h3v4.500h3v-7" fill="none" stroke="#3b4149" stroke-width="1.400"/>
</svg>
<div class="t" style="left:377px;top:115px;font-size:12px;font-weight:bold;font-family:'DejaVu Sans','Liberation Sans',sans-serif;font-size:11px;letter-spacing:-0.5px">Main</div>
<!-- canvas -->
<div class="abs" style="left:329px;top:134px;width:15px;height:877px;background:#999"></div>
<div class="abs" id="canvas" style="left:344px;top:134px;width:466px;height:877px;background:#ababab;overflow:hidden"></div>
<!-- CANVAS CONTENT -->
<svg style="left:344px;top:134px" width="466" height="877" viewBox="344 134 466 877">
<defs>
<g id="ico"><rect x="0.500" y="0.500" width="31" height="31" fill="#fff" stroke="#c3c3c3"/></g>
<g id="flt"><use href="#ico"/><rect x="5" y="6.500" width="22" height="3.600" fill="#1f9be0"/><rect x="5" y="12.200" width="22" height="3.600" fill="#1f9be0"/><rect x="5" y="17.900" width="22" height="3.600" fill="#1f9be0"/><rect x="14.300" y="2.500" width="3.400" height="23" fill="#3d4248"/><path d="M11 24.500h10l-5 5.500z" fill="#3d4248"/></g>
<g id="film"><rect x="0.600" y="0.600" width="11.800" height="9.800" fill="#fff" stroke="#3b4149" stroke-width="1.200"/><path d="M6.500 2.500v6" stroke="#3b4149" stroke-width="1"/><path d="M1 2h11M1 9h11" stroke="#3b4149" stroke-width="1.600" stroke-dasharray="1.100 1.100"/></g>
<g id="hmiL"><rect x="0" y="0" width="31" height="13.500" fill="#a6d6ea"/></g>
<path id="triF" d="M0 0l10.500 4.800-10.500 4.800z" fill="#fff"/>
<path id="triH" d="M0.700 1l8.800 3.800-8.800 3.800z" fill="#ababab" stroke="#fff" stroke-width="1.100"/>
<path id="arrO" d="M0 0l6 5-6 5" fill="none" stroke="#fff" stroke-width="2"/>
</defs>
<!-- section lines -->
<rect x="344" y="144.500" width="466" height="1.800" fill="#c9c9c9"/>
<rect x="344" y="213.800" width="466" height="1.800" fill="#c9c9c9"/>
<!-- selection -->
<rect x="439" y="485.300" width="300" height="69.200" fill="#d09254"/>
<!-- wires -->
<g fill="none" stroke="#fff" stroke-width="2">
<path d="M443.500 188h-64"/>
<path d="M407 188v417h14M425 605h9"/>
<path d="M407 272h27"/>
<path d="M407 357h6M417 357h17"/>
<path d="M407 415h6M417 415h4M425 415h9"/>
<path d="M443.500 292h-28.500v218h6M425 510h9"/>
<path d="M443.500 377h-20.500v55.500h11"/>
<path d="M443.500 449.500h-20.500v78h11"/>
<path d="M443.500 544h-20.500v78h11"/>
<path d="M734.500 282h41M734.500 432h41M734.500 540.500h41M776 515h-28"/>
</g>
<path d="M384.500 182.500l-6 5.500 6 5.500" fill="none" stroke="#fff" stroke-width="2"/>
<use href="#triF" x="433" y="267.200"/><use href="#triF" x="433" y="352.200"/><use href="#triF" x="433" y="410.200"/><use href="#triF" x="433" y="505.200"/><use href="#triF" x="433" y="600.200"/><use href="#triF" x="433" y="617.200"/>
<use href="#triH" x="433" y="427.700"/><use href="#triH" x="433" y="522.700"/>
<use href="#arrO" x="770" y="277"/><use href="#arrO" x="770" y="427"/><use href="#arrO" x="770" y="535.500"/>
<path d="M750 510l-11.500 5 11.500 5z" fill="#fff"/><circle cx="737.500" cy="515" r="1.800" fill="#fff"/>
<!-- HMI labels -->
<use href="#hmiL" x="345" y="182"/><use href="#hmiL" x="778" y="275.500"/><use href="#hmiL" x="778" y="425.500"/><use href="#hmiL" x="778" y="508.500"/><use href="#hmiL" x="778" y="534"/>
<!-- comments -->
<g fill="#ffffc6"><rect x="444" y="225" width="290.500" height="17"/><rect x="444" y="310" width="290.500" height="17"/><rect x="444" y="465" width="290.500" height="17"/><rect x="444" y="560" width="290.500" height="17"/></g>
<!-- blocks bg -->
<g fill="#fbfdfb"><rect x="444" y="168" width="290" height="40.500"/><rect x="444" y="262" width="290" height="40.500"/><rect x="444" y="347" width="290" height="40.500"/><rect x="444" y="406.500" width="290" height="50.500"/><rect x="444" y="502" width="290" height="50.500"/><rect x="444" y="597" width="290" height="50.500"/></g>
<!-- input cells -->
<g fill="#d6ebf1"><rect x="444" y="262" width="90" height="19"/><rect x="444" y="347" width="90" height="19"/><rect x="444" y="406.500" width="90" height="34"/><rect x="444" y="502" width="90" height="33.500"/><rect x="444" y="597" width="90" height="33.500"/><rect x="643.500" y="502" width="90.500" height="25.500"/></g>
<!-- output cells -->
<g fill="#eef1fa"><rect x="643.500" y="168" width="90.500" height="40.500"/><rect x="643.500" y="262" width="90.500" height="40.500"/><rect x="643.500" y="406.500" width="90.500" height="50.500"/><rect x="643.500" y="527.500" width="90.500" height="25"/><rect x="444" y="630.500" width="90" height="17"/></g>
<!-- inner lines -->
<g stroke="#b9b9b9" stroke-width="1" fill="none">
<path d="M534.500 168v40.500M643.500 168v40.500M643.500 187.500h90.500"/>
<path d="M534.500 262v40.500M643.500 262v40.500M444 281.500h90.500"/>
<path d="M534.500 347v40.500M444 366.500h90.500"/>
<path d="M534.500 406.500v50.500M643.500 406.500v50.500M444 423.500h90.500M444 440.500h90.500"/>
<path d="M534.500 502v50.500M643.500 502v50.500M444 518.500h90.500M444 535.500h90.500M643.500 527.500h90.500"/>
<path d="M534.500 597v50.500M444 613.500h90.500M444 630.500h90.500"/>
</g>
<!-- dashed borders -->
<g fill="none" stroke="#8e8e8e" stroke-width="1" stroke-dasharray="3 2">
<rect x="443.500" y="167.500" width="291" height="41"/><rect x="443.500" y="261.500" width="291" height="41"/><rect x="443.500" y="346.500" width="291" height="41"/><rect x="443.500" y="406" width="291" height="51"/><rect x="443.500" y="501.500" width="291" height="51"/><rect x="443.500" y="596.500" width="291" height="51"/>
</g>
<!-- blue circles clipped -->
<path d="M534 444.500a4.600 4.600 0 0 0 0 9.200z" fill="#cfe6fb" stroke="#3c96f0" stroke-width="1.200"/>
<path d="M534 522.500a4.600 4.600 0 0 0 0 9.200z" fill="#cfe6fb" stroke="#3c96f0" stroke-width="1.200"/>
<!-- variable labels -->
<rect x="446" y="181" width="33" height="14" rx="2.500" fill="#86c8e3"/>
<rect x="446" y="285" width="83" height="14" rx="2.500" fill="#e9a984"/>
<rect x="446" y="370" width="81" height="14" rx="2.500" fill="#8edc83"/>
<rect x="446" y="442.500" width="79" height="13.500" rx="2.500" fill="#8b8be6"/>
<rect x="446" y="537" width="86" height="14" rx="2.500" fill="#dde383"/>
<!-- icons -->
<use href="#film" x="519" y="183"/><use href="#film" x="646" y="173"/><use href="#film" x="646" y="193"/>
<use href="#ico" x="572" y="172"/>
<g transform="translate(575.500,176)"><rect x="0.800" y="0.800" width="23.400" height="22.400" fill="#fff" stroke="#3b4149" stroke-width="1.600"/><rect x="0" y="0" width="25" height="4.600" fill="#3b4149"/><rect x="0" y="19.400" width="25" height="4.600" fill="#3b4149"/><path d="M12.500 4v16" stroke="#3b4149" stroke-width="2"/><path d="M2 2.300h21M2 21.700h21" stroke="#fff" stroke-width="1.600" stroke-dasharray="1.600 1.900"/></g>
<use href="#flt" x="572" y="266"/><use href="#flt" x="572" y="351"/><use href="#flt" x="572" y="416"/><use href="#flt" x="572" y="511"/>
<rect x="545" y="538" width="88" height="13.500" fill="#fbfdfb" opacity="0.850"/>
<use href="#ico" x="572" y="606"/>
<g transform="translate(572,606)"><path d="M2.500 8.500h11M2.500 13h11M2.500 17.500h11" stroke="#4fcf1f" stroke-width="2.600"/><path d="M17 8.500h12M17 13h12M17 17.500h12" stroke="#f09a1f" stroke-width="2.600"/><path d="M12.500 6l-7 7 7 7" fill="none" stroke="#9adf7c" stroke-width="2" opacity="0.800"/><path d="M14.500 2.500l9.500 10.500-8 9v3" fill="none" stroke="#3d4248" stroke-width="2.400"/><path d="M11.500 24h9l-4.500 5z" fill="#3d4248"/></g>
<path d="M542 616.500v4l-4.500 4.500M542 620.500l4.500 4.500M536.500 623v2.500h2.500M547.500 623v2.500h-2.500" fill="none" stroke="#222" stroke-width="1.100"/>
<!-- gear -->
<circle cx="661.500" cy="159.500" r="3.600" fill="none" stroke="#5a5a5a" stroke-width="3.200"/><circle cx="661.500" cy="159.500" r="5.800" fill="none" stroke="#5a5a5a" stroke-width="2.400" stroke-dasharray="2.400 2.150"/>
</svg>
<div class="t sec" style="left:346.500px;top:145.500px">ACQUIRE</div>
<div class="t sec" style="left:346.500px;top:215.500px">PROCESS</div>
<div class="t bt" style="left:508px;top:152px">0. ReadFilmstrip(Image)</div>
<div class="t bt" style="left:526px;top:247px">2. DetectBlackSpots</div>
<div class="t bt" style="left:523px;top:332px;letter-spacing:-0.27px">4. FindCapsuleRegion</div>
<div class="t bt" style="left:522px;top:392px;letter-spacing:-0.3px">5. FindCapsuleShape?</div>
<div class="t bt" style="left:515px;top:487px">7. DetectDeformations?</div>
<div class="t bt" style="left:514px;top:582px">9. PresentResultsOrInfo</div>
<div class="t cm" style="left:447px;top:227px">Correct color?</div>
<div class="t cm" style="left:447px;top:312px">Capsule detected?</div>
<div class="t cm" style="left:447px;top:467px">Correct shape?</div>
<div class="t cm" style="left:447px;top:562px">Visualization</div>
<div class="t pt" style="left:351px;top:183px">HMI</div>
<div class="t pt" style="left:784px;top:277px">HMI</div>
<div class="t pt" style="left:784px;top:427px">HMI</div>
<div class="t pt" style="left:784px;top:510px">HMI</div>
<div class="t pt" style="left:784px;top:535px">HMI</div>
<div class="t pt" style="left:448px;top:182px">Image</div>
<div class="t pt" style="left:662px;top:173px">outImageFile...</div>
<div class="t pt" style="left:662px;top:193px">outImageFile...</div>
<div class="t pt" style="left:446px;top:266px">inImage</div>
<div class="t pt" style="left:448px;top:286px">BlackspotsImage</div>
<div class="t pt r" style="left:644px;width:87px;top:276px">outIsCorrect</div>
<div class="t pt" style="left:446px;top:351px">inImage</div>
<div class="t pt" style="left:448px;top:371px">CapsuleRegion?</div>
<div class="t pt" style="left:446px;top:409px">inImage</div>
<div class="t pt" style="left:446px;top:426px">inRegion</div>
<div class="t pt" style="left:448px;top:443px">CapsuleShape?</div>
<div class="t pt r" style="left:644px;width:87px;top:426px">outShapeOrNot...</div>
<div class="t pt" style="left:446px;top:504px">inImage</div>
<div class="t pt" style="left:446px;top:521px">inShape</div>
<div class="t pt" style="left:448px;top:538px">DeformationsIm...</div>
<div class="t pt r" style="left:644px;width:87px;top:508px">inBendErrorThre...</div>
<div class="t pt r" style="left:644px;width:87px;top:534.500px">outIsCorrect?</div>
<div class="t pt" style="left:549px;top:539px;color:#1e8fff">Show/Hide Ports</div>
<div class="t pt" style="left:446px;top:599px">inInputImage</div>
<div class="t pt" style="left:446px;top:616px">inResultImage?</div>
<div class="t pt" style="left:446px;top:633px">outImage</div>
<!-- MAIN VIEWER -->
<div class="abs" style="left:816px;top:85px;width:1104px;height:506px;background:#f0f0f0;border-top:1px solid #b9b9b9;border-left:1px solid #dcdcdc"></div>
<svg style="left:816px;top:85px" width="1104" height="24" viewBox="816 85 1104 24">
<path d="M966.500 106v-16.500q0-2 2-2h64q2.500 0 2.500 2.500v16" fill="#f4f4f4" stroke="#b4b4b4" stroke-width="1"/>
<path d="M819 106.500l17.500-17.500q1.500-1.500 4-1.500h123.500q2.500 0 2.500 2.500v16.500z" fill="#fff" stroke="#b4b4b4" stroke-width="1"/>
<path d="M1883.500 91.500l-4.500 4.500 4.500 4.500zM1892.500 91.500l4.500 4.500-4.500 4.500z" fill="#f0f0f0" stroke="#222" stroke-width="1"/>
<path d="M1906.500 93.500l7 7M1913.500 93.500l-7 7" stroke="#111" stroke-width="2.200"/>
</svg>
<div class="t" style="left:835.500px;top:90.500px;font-size:12px;font-weight:bold;letter-spacing:-0.2px;color:#000">outDeformationsImage</div>
<div class="t" style="left:971px;top:90.500px;font-size:12px;letter-spacing:-0.7px;color:#111">inImage (+2)</div>
<div class="abs" style="left:817px;top:106px;width:1102px;height:485px;background:#f8ce00"></div>
<div class="abs chk" id="mv" style="left:819px;top:108px;width:1098px;height:481px;overflow:hidden">
<svg style="left:228px;top:0" width="640.800" height="480.600" viewBox="1047.500 108 640 480" preserveAspectRatio="none">
<defs>
<linearGradient id="bg" x1="0" y1="0" x2="0" y2="1">
<stop offset="0.0000" stop-color="#a2a2a2"/><stop offset="0.1979" stop-color="#a6a6a6"/><stop offset="0.2156" stop-color="#ababab"/><stop offset="0.2198" stop-color="#8f8f8f"/><stop offset="0.2271" stop-color="#9f9f9f"/><stop offset="0.4792" stop-color="#a7a7a7"/><stop offset="0.7396" stop-color="#9d9d9d"/><stop offset="0.7771" stop-color="#959595"/><stop offset="0.7865" stop-color="#aeaeae"/><stop offset="1.0000" stop-color="#b4b4b4"/>
</linearGradient>
<linearGradient id="bgr" x1="0" y1="0" x2="1" y2="0"><stop offset="0" stop-color="#000" stop-opacity="0.050"/><stop offset="0.650" stop-color="#000" stop-opacity="0.010"/><stop offset="0.700" stop-color="#fff" stop-opacity="0"/><stop offset="1" stop-color="#fff" stop-opacity="0.060"/></linearGradient>
<radialGradient id="cg" cx="0.5" cy="0.5" r="0.5"><stop offset="0" stop-color="#858585"/><stop offset="0.650" stop-color="#7c7c7c"/><stop offset="1" stop-color="#767676"/></radialGradient>
<path id="ol" d="M1083.0 259.1L1083.8 244.4L1086.0 232.3L1089.9 225.4L1095.1 220.2L1100.3 215.9L1107.2 213.3L1121.0 212.1L1156.5 209.4L1191.1 205.9L1225.8 202.5L1300.0 196.0L1360.0 190.7L1387.7 189.0L1415.4 186.8L1435.3 185.1L1442.2 184.2L1449.1 185.5L1456.0 187.7L1462.1 191.2L1468.2 195.5L1471.6 200.7L1474.2 207.6L1476.0 215.4L1477.3 228.4L1479.0 249.1L1484.0 340.0L1489.0 430.0L1489.9 459.4L1485.1 472.4L1475.2 481.9L1462.2 487.1L1440.6 489.7L1385.2 496.6L1290.0 503.8L1238.4 509.1L1209.8 510.8L1189.0 511.8L1168.3 513.1L1154.4 513.7L1140.6 513.7L1133.7 512.7L1126.7 510.1L1120.7 506.2L1115.5 501.4L1109.9 489.3L1107.7 482.4L1106.0 468.6L1104.7 454.7L1102.5 440.0L1093.0 350.0Z" stroke-linejoin="round"/><clipPath id="trayclip"><use href="#ol"/></clipPath>
<filter id="b1"><feGaussianBlur stdDeviation="1.200"/></filter>
<filter id="b3"><feGaussianBlur stdDeviation="3"/></filter>
<filter id="b8" x="-20%" y="-100%" width="140%" height="300%"><feGaussianBlur stdDeviation="9"/></filter>
</defs>
<rect x="1047.500" y="108" width="640" height="480" fill="url(#bg)"/>
<rect x="1047.500" y="108" width="640" height="480" fill="url(#bgr)"/>
<ellipse cx="1150" cy="197" rx="150" ry="20" fill="#000" opacity="0.065" filter="url(#b8)"/>
<!-- tray -->
<use href="#ol" fill="#8a8a8a"/>
<g clip-path="url(#trayclip)">

<path d="M1215 507Q1300 489 1392 491L1440 488L1440 500L1200 520Z" fill="#a0a0a0" filter="url(#b1)"/><path d="M1200 509Q1300 487 1392 489.500L1445 487" fill="none" stroke="#5f5f5f" stroke-width="3" filter="url(#b1)"/>
<path d="M1142 249L1439 229L1453 449L1158 466Z" fill="#848484" stroke="#999999" stroke-width="6" stroke-linejoin="round" filter="url(#b3)"/>
<path d="M1146 253L1435 233.500L1448.500 444.500L1161.500 461.500Z" fill="none" stroke="#757575" stroke-width="1.600" stroke-linejoin="round" filter="url(#b1)"/>
<path d="M1092 268Q1130 282 1170 286T1250 282L1215 330L1160 300L1146 253L1100 250Z" fill="#767676" opacity="0.350" filter="url(#b3)"/>
<path d="M1380 240L1440 236L1447 430L1400 400Z" fill="#8f8f8f" opacity="0.250" filter="url(#b3)"/>
<use href="#ol" fill="none" stroke="#5c5c5c" stroke-width="3" transform="translate(1290,350) scale(0.978) translate(-1290,-350)" opacity="0.900"/><use href="#ol" fill="none" stroke="#9a9a9a" stroke-width="1.500" transform="translate(1290,350) scale(0.958) translate(-1290,-350)" opacity="0.700"/>
<!-- membrane lines -->
<path d="M1091 267Q1130 281 1165 285.500T1232 285.500L1250 282" fill="none" stroke="#5e5e5e" stroke-width="1.900" filter="url(#b1)"/>
<path d="M1471.500 255.500Q1452 285 1439 306T1411.500 348Q1403 362 1394 365T1370 352.500L1365.500 339" fill="none" stroke="#626262" stroke-width="1.900" filter="url(#b1)"/>
<path d="M1474 262Q1456 290 1443 311T1415 352Q1406 366 1396 369" fill="none" stroke="#a2a2a2" stroke-width="2.200" filter="url(#b1)" opacity="0.600"/>
<!-- circle -->
<circle cx="1290" cy="350.500" r="75" fill="url(#cg)" stroke="#616161" stroke-width="2.800" filter="url(#b1)"/>
<circle cx="1293" cy="349" r="53" fill="none" stroke="#8c8c8c" stroke-width="3" filter="url(#b1)" opacity="0.750"/>
<circle cx="1294" cy="349" r="47" fill="none" stroke="#727272" stroke-width="1.500" filter="url(#b1)" opacity="0.600"/>
<circle cx="1298" cy="348" r="10.500" fill="none" stroke="#909090" stroke-width="2.600" filter="url(#b1)" opacity="0.850"/>
<path d="M1303 318l9 2.500" stroke="#a8a8a8" stroke-width="2.600" filter="url(#b1)"/>
<path d="M1285 322l-8 4" stroke="#939393" stroke-width="2" filter="url(#b1)"/>
</g>
<path d="M1365 327l5 2" stroke="#222" stroke-width="1.600"/>
<!-- outline -->
<use href="#ol" fill="none" stroke="#fff" stroke-width="1.200"/>
<use href="#ol" fill="none" stroke="#fff" stroke-width="3.800" stroke-linecap="round" stroke-dasharray="0 6.950"/><use href="#ol" fill="none" stroke="#b4b4b4" stroke-width="1.500" stroke-linecap="round" stroke-dasharray="0 6.950"/>
<circle cx="1367.500" cy="328" r="20" fill="none" stroke="#ff0000" stroke-width="2.600"/>
<path d="M1232 498.500Q1300 485.500 1385 487" fill="none" stroke="#ff0000" stroke-width="7" stroke-linecap="round"/>
</svg>
<!-- overlay -->
<div class="abs" style="left:0;top:0;width:239px;height:65px;background:rgba(0,0,0,0.430)"></div>
<div class="abs" style="left:0;top:30px;width:239px;height:1px;background:rgba(255,255,255,0.130)"></div>
<div class="t ov" style="left:5px;top:3px">Zoom: 100%</div>
<div class="t ov" style="left:5px;top:16px">-167, 466</div>
<div class="t ov" style="left:5px;top:33px;letter-spacing:0.1px">DeformationsImage 640x480 3xUInt8</div>
<svg style="left:0;top:0" width="240" height="66" viewBox="819 108 240 66">
<path d="M1030 152.500c0-6 4-9.500 10.500-10c0.500 6-3 9.500-9 9.500" fill="none" stroke="#7fdc7f" stroke-width="1.600"/><path d="M1029.500 153.500l6-6" stroke="#7fdc7f" stroke-width="1.200"/>
<circle cx="1050.200" cy="147.500" r="6" fill="#86e086"/><path d="M1047.500 144.800l5.400 5.400M1052.900 144.800l-5.400 5.400" stroke="#222" stroke-width="1.800"/>
<path d="M933 164l5.500-4.500 5.500 4.500M933 169l5.500-4.500 5.500 4.500" fill="none" stroke="#86e086" stroke-width="1.700"/>
</svg>
</div>
<!-- separators -->
<div class="abs" style="left:817px;top:591px;width:1103px;height:4px;background:#f8f8f8"></div>
<div class="abs" style="left:817px;top:838px;width:1103px;height:4px;background:#f9f9f9"></div>
<!-- SUB PANEL 1: inBendErrorThreshold -->
<div class="abs" style="left:816px;top:595px;width:363px;height:242px;background:#f0f0f0;border-left:1px solid #c8c8c8"></div>
<div class="panel" style="left:817px;top:615px;width:362px;height:223px;border-left:1px solid #b4b4b4;border-bottom:1px solid #a4a4a4"></div>
<div class="abs" style="left:817px;top:614px;width:362px;height:1px;background:#b4b4b4"></div>
<svg style="left:816px;top:594px" width="364" height="22" viewBox="816 594 364 22">
<path d="M819.500 614.500l15.500-16.500q1.500-1.500 4-1.500h101.500q2.500 0 2.500 2.500v16z" fill="#fff" stroke="#b4b4b4" stroke-width="1"/>
<path d="M1142.500 600.500l-4.500 4.500 4.500 4.500zM1152.500 600.500l4.500 4.500-4.500 4.500z" fill="#f0f0f0" stroke="#222" stroke-width="1"/>
<path d="M1166.500 602l7 7M1173.500 602l-7 7" stroke="#111" stroke-width="2.200"/>
</svg>
<div class="t vtab" style="left:835px;top:600px">inBendErrorThreshold</div>
<div class="abs" style="left:820px;top:617px;width:159px;height:22px;background:#f0f0f0;border:1px solid #111"></div>
<div class="abs" style="left:978px;top:617px;width:57px;height:22px;background:#fff;border:1px solid #7a7a7a"></div>
<div class="t" style="left:826px;top:619.500px;font-size:15px;color:#111;letter-spacing:0.1px;transform:scaleX(0.94)">inBendErrorThreshold</div>
<div class="t" style="left:983px;top:620.500px;font-size:13px;font-family:'Liberation Mono',monospace;color:#111">9.000</div>
<!-- SUB PANEL 2 -->
<div class="abs" style="left:1183px;top:595px;width:362px;height:242px;background:#f0f0f0"></div>
<svg style="left:1182px;top:594px" width="364" height="22" viewBox="1182 594 364 22">
<path d="M1185.500 614.500l15.500-16.500q1.500-1.500 4-1.500h114q2.500 0 2.500 2.500v16z" fill="#fff" stroke="#b4b4b4" stroke-width="1"/>
<path d="M1508.500 600.500l-4.500 4.500 4.500 4.500zM1518.500 600.500l4.500 4.500-4.500 4.500z" fill="#f0f0f0" stroke="#222" stroke-width="1"/>
<path d="M1532.500 602l7 7M1539.500 602l-7 7" stroke="#111" stroke-width="2.200"/>
</svg>
<div class="t vtab" style="left:1201px;top:600px">outShapeOrNothing (+1)</div>
<div class="abs chk" style="left:1183px;top:615px;width:362px;height:222px;background-position:2px 1.700px;overflow:hidden;box-shadow:inset 0 0 0 1.700px #121212">
<div class="abs" style="left:0;top:0;width:138px;height:28px;background:rgba(0,0,0,0.370)"></div>
<div class="abs" style="left:0;top:28px;width:138px;height:4px;background:rgba(0,0,0,0.200)"></div>
<div class="abs" style="left:0;top:32px;width:138px;height:49px;background:rgba(0,0,0,0.370)"></div>
<svg style="left:0;top:0" width="362" height="222" viewBox="1183 615 362 222">
<path d="M1268.500 645.300L1445.500 629.700Q1468 628.300 1473.500 640.300Q1476 647.300 1476.500 657.300L1484 781Q1485 799 1469 806.500L1428 806.500L1386 806.500Q1354 809.500 1322 816.500L1294 822L1277 823Q1261 823.500 1257.700 803L1245 670Q1243.500 650.300 1268.500 645.300Z" fill="none" stroke="#2b2bd6" stroke-width="2.400"/>
<path d="M1268.500 646L1445.500 630.400Q1468 629 1473.500 641Q1476 648 1476.500 658L1484 781.500Q1485 799 1469 807L1277 823Q1261 823.500 1257.700 803L1245 670.500Q1243.500 651 1268.500 646Z" fill="none" stroke="#2aa4e4" stroke-width="2.100"/>
<rect x="1270" y="652" width="4.200" height="9.500" fill="#3636e8"/><rect x="1270" y="666" width="4.200" height="9.500" fill="#2aa4e4"/>
<g stroke="#86e086" stroke-width="1.600" fill="none"><path d="M1277.500 653.500h11.500M1277.500 657h11.500M1277.500 660.500h11.500M1277.500 667.500h11.500M1277.500 671h11.500M1277.500 674.500h11.500"/>
<path d="M1293 662c0-6 4-9.500 10.500-10c0.500 6-3 9.500-9 9.500M1292.500 663l6-6"/><path d="M1293 676c0-6 4-9.500 10.500-10c0.500 6-3 9.500-9 9.500M1292.500 677l6-6"/>
<path d="M1247.500 687l5.500-4.500 5.500 4.500M1247.500 692l5.500-4.500 5.500 4.500"/></g>
<circle cx="1313" cy="657" r="6.200" fill="#86e086"/><path d="M1310.200 654.200l5.600 5.600M1315.800 654.200l-5.600 5.600" stroke="#222" stroke-width="1.800"/>
<circle cx="1313" cy="671" r="6.200" fill="#86e086"/><path d="M1310.200 668.200l5.600 5.600M1315.800 668.200l-5.600 5.600" stroke="#222" stroke-width="1.800"/>
</svg>
<div class="t ov" style="left:6.500px;top:4.500px">Zoom: 59%</div>
<div class="t ov" style="left:6.500px;top:35.500px;letter-spacing:0.1px">CapsuleShape</div>
<div class="t ov" style="left:6.500px;top:49.500px;letter-spacing:0.05px">FittedPath</div>
</div>
<!-- SUB PANEL 3 -->
<div class="abs" style="left:1549px;top:595px;width:371px;height:242px;background:#f0f0f0"></div>
<svg style="left:1548px;top:594px" width="372" height="22" viewBox="1548 594 372 22">
<path d="M1551.500 614.500l15.500-16.500q1.500-1.500 4-1.500h93q2.500 0 2.500 2.500v16z" fill="#fff" stroke="#b4b4b4" stroke-width="1"/>
<path d="M1883.500 600.500l-4.500 4.500 4.500 4.500zM1892.500 600.500l4.500 4.500-4.500 4.500z" fill="#f0f0f0" stroke="#222" stroke-width="1"/>
<path d="M1906.500 602l7 7M1913.500 602l-7 7" stroke="#111" stroke-width="2.200"/>
</svg>
<div class="t vtab" style="left:1567px;top:600px">outShapeOrNothing</div>
<div class="abs chk" style="left:1549.500px;top:615px;width:368px;height:222px;background-position:1.600px 1.700px;overflow:hidden;box-shadow:inset 0 0 0 1.700px #121212">
<div class="abs" style="left:0;top:0;width:137px;height:28px;background:rgba(0,0,0,0.370)"></div>
<div class="abs" style="left:0;top:28px;width:137px;height:4px;background:rgba(0,0,0,0.200)"></div>
<div class="abs" style="left:0;top:32px;width:137px;height:35px;background:rgba(0,0,0,0.370)"></div>
<svg style="left:0;top:0" width="368" height="222" viewBox="1549.500 615 368 222">
<path d="M1634.500 645L1815.800 630.400Q1836 629 1841.500 640.600Q1845 648 1845.700 657.700L1854.200 781.500Q1855 799 1839.300 807L1794.500 807L1751.800 807Q1720 810.500 1687.700 816.700L1660 822L1645 823.800Q1629.500 824 1625.800 802.800L1613 666Q1612 649.500 1634.500 645Z" fill="none" stroke="#7fa3b5" stroke-width="2.600"/>
<path d="M1634.500 645L1815.800 630.400Q1836 629 1841.500 640.600Q1845 648 1845.700 657.700L1854.200 781.500Q1855 799 1839.300 807L1794.500 807L1751.800 807Q1720 810.500 1687.700 816.700L1660 822L1645 823.800Q1629.500 824 1625.800 802.800L1613 666Q1612 649.500 1634.500 645Z" fill="none" stroke="#c2dce8" stroke-width="1.500" stroke-dasharray="1.500 1.500"/>
<g stroke="#86e086" stroke-width="1.600" fill="none"><path d="M1643.500 653.500h11.500M1643.500 657h11.500M1643.500 660.500h11.500"/>
<path d="M1659 662c0-6 4-9.500 10.500-10c0.500 6-3 9.500-9 9.500M1658.500 663l6-6"/>
<path d="M1613 673l5.500-4.500 5.500 4.500M1613 678l5.500-4.500 5.500 4.500"/></g>
<circle cx="1679" cy="657" r="6.200" fill="#86e086"/><path d="M1676.200 654.200l5.600 5.600M1681.800 654.200l-5.600 5.600" stroke="#222" stroke-width="1.800"/>
</svg>
<div class="t ov" style="left:6.500px;top:4.500px">Zoom: 59%</div>
<div class="t ov" style="left:6.500px;top:35.500px;letter-spacing:0.1px">CapsuleShape</div>
</div>
<div class="abs" style="left:1179px;top:595px;width:4px;height:243px;background:#f8f8f8"></div>
<div class="abs" style="left:1545px;top:595px;width:4.500px;height:243px;background:#f8f8f8"></div>
<!-- CONSOLE -->
<div class="hdr" style="left:816px;top:842px;width:1104px;height:24px"><div class="t" style="left:5px;top:4.500px">Console</div></div>
<svg style="left:1880px;top:842px" width="40" height="24" viewBox="1880 842 40 24"><path d="M1884 852.500h8.500l-4.250 4.500z" fill="#111"/><path d="M1904 850.500l7 7M1911 850.500l-7 7" stroke="#111" stroke-width="2.200"/></svg>
<div class="panel" style="left:817px;top:866px;width:1102px;height:121px;border-left:1px solid #b4b4b4"></div>
<div class="abs" style="left:817px;top:987px;width:1102px;height:2px;background:#c9c9c9;border-bottom:1px solid #aaa"></div>
<div class="abs" style="left:1902px;top:866px;width:16px;height:121px;background:#f0f0f0"></div>
<div class="abs" style="left:1903.500px;top:954px;width:12px;height:17px;background:#cdcdcd"></div>
<svg style="left:1902px;top:866px" width="16" height="121" viewBox="0 0 16 121" fill="none" stroke="#555" stroke-width="1.400"><path d="M4.500 11l3.500-3.500 3.500 3.500M4.500 111.500l3.500 3.500 3.500-3.500"/></svg>
<div class="abs" style="left:818px;top:885px;width:1084px;height:1px;background:#ececec"></div>
<div class="abs" style="left:818px;top:905px;width:1084px;height:1px;background:#ececec"></div>
<div class="abs" style="left:818px;top:925px;width:1084px;height:1px;background:#ececec"></div>
<div class="abs" style="left:818px;top:945px;width:1084px;height:1px;background:#ececec"></div>
<div class="abs" style="left:818px;top:965px;width:1084px;height:1px;background:#ececec"></div>
<div class="abs" style="left:818px;top:985px;width:1084px;height:1px;background:#ececec"></div>
<div class="abs" style="left:902px;top:866px;width:1px;height:120px;background:#ececec"></div>
<div class="abs" style="left:972px;top:866px;width:1px;height:120px;background:#ececec"></div>
<div class="t mono" style="left:825px;top:870px">Time</div><div class="t mono" style="left:910px;top:870px">Level</div><div class="t mono" style="left:980px;top:870px">Message</div>
<div class="t mono" style="left:821px;top:889px">11:58:38</div><div class="t mono" style="left:906px;top:889px">Info</div><div class="t mono" style="left:976px;top:889px">Loaded program.</div>
<div class="t mono" style="left:821px;top:909px">11:58:47</div><div class="t mono" style="left:906px;top:909px">Info</div><div class="t mono" style="left:976px;top:909px">[Main] Program initialized.</div>
<div class="t mono" style="left:821px;top:929px">11:59:41</div><div class="t mono" style="left:906px;top:929px">Info</div><div class="t mono" style="left:976px;top:929px">[Main] Program execution stopped.</div>
<div class="t mono" style="left:821px;top:949px">11:59:42</div><div class="t mono" style="left:906px;top:949px">Info</div><div class="t mono" style="left:976px;top:949px">[Main] Program initialized.</div>
<div class="t mono" style="left:821px;top:969px">12:00:19</div><div class="t mono" style="left:906px;top:969px">Info</div><div class="t mono" style="left:976px;top:969px">[Main] Program execution stopped.</div>
<!-- console tabs -->
<div class="abs" style="left:816px;top:990px;width:1104px;height:22px;background:#f6f6f6"></div>
<div class="abs" style="left:931px;top:988px;width:67px;height:24px;background:#fff;border:1px solid #a8a8a8;border-top:none;border-radius:0 0 4px 4px"></div>
<svg style="left:816px;top:990px" width="190" height="22" viewBox="816 990 190 22">
<g fill="#e63232"><rect x="819" y="993.500" width="2" height="2"/><rect x="819" y="1005.500" width="2" height="2"/></g><g fill="#35b535"><rect x="819" y="997.500" width="2" height="2"/><rect x="819" y="1001.500" width="2" height="2"/></g>
<path d="M823 994.500h8M823 998.500h8M823 1002.500h8M823 1006.500h6" stroke="#3b4149" stroke-width="1.500"/>
<rect x="878" y="993" width="1" height="15" fill="#b0b0b0"/>
<rect x="885" y="993.500" width="11" height="14" fill="#c9cdd2"/><rect x="884" y="993.500" width="1.200" height="14" fill="#3b4149"/>
<text x="890.800" y="1005.200" font-family="Liberation Sans,sans-serif" font-size="11.500" fill="#3b4149" text-anchor="middle">?</text>
<rect x="934" y="994" width="15.500" height="13" fill="#2f3338"/><path d="M936.500 997l4 3.300-4 3.300M942 1004.500h5" stroke="#fff" stroke-width="1.300" fill="none"/>
</svg>
<div class="t tab" style="left:839px;top:995px;color:#6e6e6e">Results</div>
<div class="t tab" style="left:902px;top:995px;color:#6e6e6e">Hints</div>
<div class="t tab" style="left:953px;top:995px;color:#111">Console</div>
</div>
</body>
</html>
